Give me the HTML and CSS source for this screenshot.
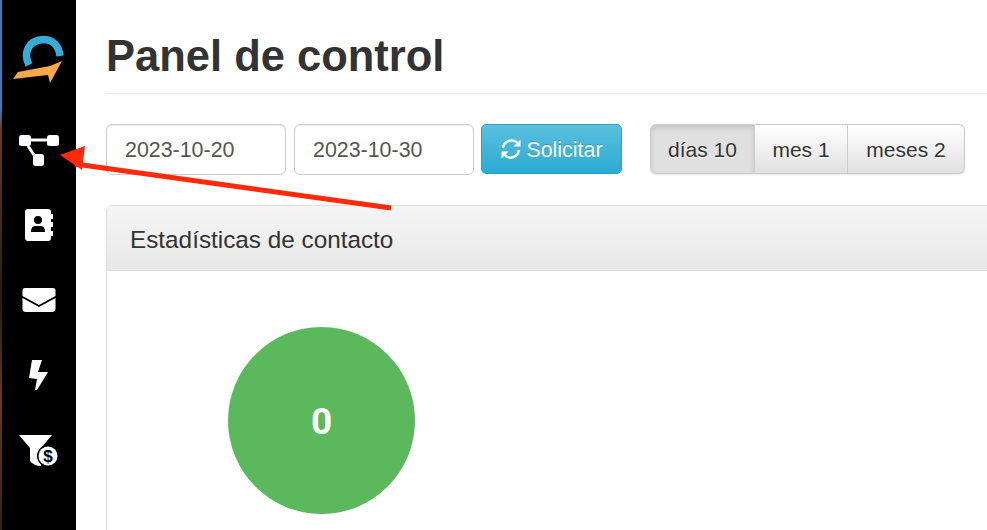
FILE: index.html
```html
<!DOCTYPE html>
<html lang="es">
<head>
  <meta charset="UTF-8" />
  <meta name="viewport" content="width=device-width, initial-scale=1.0"/>
  <title>Panel de control</title>
  <link rel="stylesheet" href="styles.css">
</head>
<body>
  <div class="app">
    <nav class="sidebar">
      <div class="logo">
        <svg width="54" height="52" viewBox="0 0 54 52">
          <path d="M18 32 C12 20 17 7 33 6.500 C43 7 48 14 49 23" fill="none" stroke="#38acd8" stroke-width="7.500"/>
          <path d="M2 46 L7 39 L39 33 L51 28 L39 50 L37 42 Z" fill="#f9a94b"/>
        </svg>
      </div>
      <a class="nav-item">
        <svg width="42" height="34" viewBox="0 0 42 34">
          <path d="M12 7 H30 M10 13 L16 22" stroke="#fff" stroke-width="3" fill="none"/>
          <rect x="1" y="2" width="12" height="11" rx="2.500" fill="#fff"/>
          <rect x="29" y="2" width="12" height="11" rx="2.500" fill="#fff"/>
          <rect x="15" y="21" width="11" height="12" rx="2.500" fill="#fff"/>
        </svg>
      </a>
      <a class="nav-item">
        <svg width="30" height="34" viewBox="0 0 30 34">
          <path d="M4 1 H24 Q27 1 27 4 V30 Q27 33 24 33 H4 Q1 33 1 30 V4 Q1 1 4 1 Z" fill="#fff"/>
          <path d="M27 6 H29 V11 H27 Z M27 14 H29 V19 H27 Z M27 23 H29 V28 H27 Z" fill="#fff"/>
          <circle cx="14" cy="12" r="4" fill="#000"/>
          <path d="M7 24 Q7 18 11 18 H17 Q21 18 21 24 Z" fill="#000"/>
        </svg>
      </a>
      <a class="nav-item">
        <svg width="34" height="26" viewBox="0 0 34 26">
          <path d="M3 1 H31 Q33 1 33.500 3 V9 L17 18 L.5 9 V3 Q1 1 3 1 Z" fill="#fff"/>
          <path d="M.5 11 L17 20 L33.500 11 V22 Q33.500 25 30 25 H4 Q.5 25 .5 22 Z" fill="#fff"/>
        </svg>
      </a>
      <a class="nav-item">
        <svg width="22" height="34" viewBox="0 0 22 34">
          <path d="M4 2 H14 L10 14 H20 L9 32 H7 L9 21 L1 20 Z" fill="#fff"/>
        </svg>
      </a>
      <a class="nav-item">
        <svg width="40" height="34" viewBox="0 0 40 34">
          <path d="M0 2 H33 L22 15 V33 Q15 33 11 28 V15 Z" fill="#fff"/>
          <circle cx="29" cy="23" r="11" fill="#000"/>
          <circle cx="29" cy="23" r="9.500" fill="#fff"/>
          <text class="dollar" x="29" y="29" text-anchor="middle">$</text>
        </svg>
      </a>
    </nav>

    <main class="content">
      <h1 class="page-title">Panel de control</h1>

      <div class="toolbar">
        <div class="date-input">2023-10-20</div>
        <div class="date-input">2023-10-30</div>
        <button class="btn-request">
          <svg width="22" height="22" viewBox="0 0 22 22">
            <path d="M3 10 A8.500 8.500 0 0 1 17.500 5 M19 12 A8.500 8.500 0 0 1 4.500 17" fill="none" stroke="#fff" stroke-width="2.400"/>
            <path d="M20.500 1.500 V8.500 H13.500 Z M1.500 20.500 V13.500 H8.500 Z" fill="#fff"/>
          </svg>
          <span class="btn-label">Solicitar</span>
        </button>
        <div class="btn-group">
          <button class="range range-days active">días 10</button>
          <button class="range range-month">mes 1</button>
          <button class="range range-months">meses 2</button>
        </div>
      </div>

      <section class="panel">
        <div class="panel-heading">Estadísticas de contacto</div>
        <div class="panel-body">
          <div class="stat-circle">0</div>
        </div>
      </section>
    </main>
  </div>

  <!-- red annotation arrow drawn over the page -->
  <svg class="arrow" width="400" height="60" viewBox="0 0 400 60">
    <path d="M391 59 L75 15" stroke="#ff2a0a" stroke-width="5" fill="none"/>
    <path d="M60 6 L85 -3 L82 21 Z" fill="#ff2a0a"/>
  </svg>
</body>
</html>
```

FILE: styles.css
```css
* {
  box-sizing: border-box;
}

html, body {
  height: 100%;
}

body {
  margin: 0;
  overflow: hidden;
  background: #fff;
  font-family: "Liberation Sans", Arial, sans-serif;
  color: #333;
}

.app {
  display: flex;
  height: 530px;
  overflow: hidden;
}

.sidebar {
  width: 76px;
  flex-shrink: 0;
  background: #000;
  border-left: 2px solid;
  border-image: linear-gradient(#3a78c8 0, #3a78c8 110px, #6a3a1c 130px, #2a1a12 300px, #6a3a1c 400px, #3a2010 530px) 1;
  display: flex;
  flex-direction: column;
  align-items: center;
}

.logo {
  height: 112px;
  padding-top: 33px;
  margin-left: -2px;
}

.nav-item {
  height: 75px;
  display: flex;
  align-items: center;
  justify-content: center;
}

.dollar {
  font-size: 17px;
  font-weight: bold;
  fill: #000;
}

.content {
  flex: 1;
  min-width: 0;
  padding-left: 30px;
  overflow: hidden;
}

.page-title {
  margin: 0;
  height: 94px;
  padding-top: 31px;
  border-bottom: 1px solid #eee;
  font-size: 43.500px;
  line-height: 50px;
  font-weight: bold;
  color: #333;
  white-space: nowrap;
}

.toolbar {
  display: flex;
  align-items: flex-start;
  margin-top: 30px;
}

.date-input {
  width: 180px;
  height: 51px;
  margin-right: 8px;
  padding-left: 18px;
  border: 1px solid #ccc;
  border-radius: 6px;
  font-size: 21.400px;
  line-height: 51px;
  color: #555;
  box-shadow: inset 0 1px 1px rgba(0,0,0,0.075);
}

.btn-request {
  width: 141px;
  height: 50px;
  margin-left: -1px;
  display: flex;
  align-items: center;
  justify-content: center;
  gap: 4px;
  padding: 0;
  border: 1px solid #28a4c9;
  border-radius: 5px;
  background: linear-gradient(#5bc0de, #2aabd2);
  color: #fff;
  font-family: inherit;
  font-size: 21.400px;
  text-shadow: 0 -1px 0 rgba(0,0,0,0.2);
}

.btn-label {
  padding-top: 2px;
}

.btn-group {
  display: flex;
  margin-left: 28px;
  height: 50px;
  border-radius: 6px;
  box-shadow: 0 1px 2px rgba(0,0,0,0.1);
}

.range {
  height: 50px;
  padding: 2px 0 0;
  border: 1px solid #ccc;
  border-left: 0;
  background: linear-gradient(#fff, #e0e0e0);
  color: #333;
  font-family: inherit;
  font-size: 21px;
  text-shadow: 0 1px 0 #fff;
}

.range-days {
  width: 105px;
  border-left: 1px solid #ccc;
  border-radius: 6px 0 0 6px;
}

.range-month {
  width: 93px;
}

.range-months {
  width: 117px;
  border-radius: 0 6px 6px 0;
}

.range.active {
  background: #e0e0e0;
  box-shadow: inset 0 3px 5px rgba(0,0,0,0.125);
}

.panel {
  width: 920px;
  height: 325px;
  margin-top: 30px;
  border: 1px solid #ddd;
  border-bottom: 0;
  border-radius: 6px 0 0 0;
}

.panel-heading {
  height: 65px;
  padding-left: 23px;
  border-bottom: 1px solid #ddd;
  background: linear-gradient(#f5f5f5, #e8e8e8);
  font-size: 24.300px;
  line-height: 67px;
}

.panel-body {
  padding: 56px 0 0 121px;
}

.stat-circle {
  width: 187px;
  height: 187px;
  border-radius: 50%;
  background: #5cb85c;
  color: #fff;
  font-family: Roboto, sans-serif;
  font-size: 37px;
  font-weight: 700;
  line-height: 189px;
  text-align: center;
}

.arrow {
  position: absolute;
  left: 0;
  top: 149px;
  overflow: visible;
}
```
